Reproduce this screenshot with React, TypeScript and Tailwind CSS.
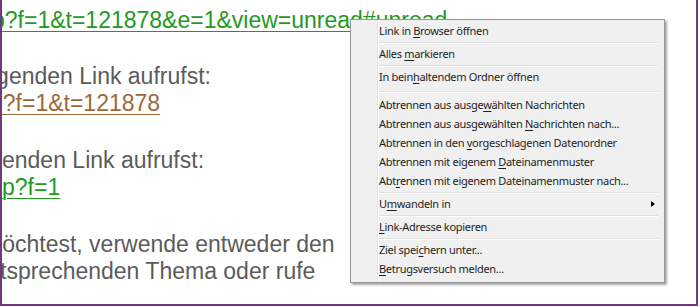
import { ReactNode } from 'react';

const lineCls = 'whitespace-nowrap h-[27px] leading-[27px]';

function Sep({ className = '' }: { className?: string }) {
  return (
    <div className={`ml-[26px] mr-[6px] border-t border-[#e0e0e0] border-b border-b-white ${className}`} />
  );
}

function Item({ children, tall, arrow }: { children: ReactNode; tall?: boolean; arrow?: boolean }) {
  return (
    <div className={`relative flex items-center pl-[28px] ${tall ? 'h-[21px]' : 'h-[19px]'}`}>
      <span>{children}</span>
      {arrow && (
        <span className="absolute right-[9px] top-[6px] w-0 h-0 border-y-[3.5px] border-y-transparent border-l-[4px] border-l-black" />
      )}
    </div>
  );
}

function K({ children }: { children: ReactNode }) {
  return <u className="underline underline-offset-[2px] decoration-[1px]">{children}</u>;
}

export default function App() {
  return (
    <div className="w-[700px] h-[307px] bg-white">
      <div
        className="relative w-[698px] h-[306px] overflow-hidden border-l-2 border-r-2 border-b-2 border-[#74367f] text-[23px] text-[#5b5b5b]"
        style={{ fontFamily: '"Liberation Sans", Arial, sans-serif' }}
      >
        <div className="pt-[7px]">
          <div className={`${lineCls} text-[#1f9a1f] underline underline-offset-[3px] decoration-[1px]`}>
            <span className="-ml-[10px]">p?f=1&amp;t=121878&amp;e=1&amp;view=unread#unread</span>
          </div>

          <div className={`${lineCls} mt-[29px]`}>
            <span className="-ml-[11px]">lgenden Link aufrufst:</span>
          </div>
          <div className={`${lineCls} text-[#9a6a3c] underline underline-offset-[3px] decoration-[1px]`}>
            <span className="-ml-[12px]">p?f=1&amp;t=121878</span>
          </div>

          <div className={`${lineCls} mt-[30px]`}>
            <span>enden Link aufrufst:</span>
          </div>
          <div className={`${lineCls} text-[#1f9a1f] underline underline-offset-[3px] decoration-[1px]`}>
            <span>p?f=1</span>
          </div>

          <div className={`${lineCls} mt-[30px]`}>
            <span className="-ml-[19px]">möchtest, verwende entweder den</span>
          </div>
          <div className={lineCls}>
            <span className="-ml-[2px]">tsprechenden Thema oder rufe</span>
          </div>
        </div>

        <div
          className="absolute left-[348px] top-[19px] w-[315px] border border-[#979797] bg-[#f0f0f0] pt-[1px] pb-[3px] text-[11px] tracking-[-0.3px] text-[#1e1e1e] shadow-[2px_2px_2px_rgba(0,0,0,0.35)]"
          style={{ fontFamily: '"Noto Sans", "Open Sans", sans-serif' }}
        >
          <div className="absolute left-[26px] top-0 bottom-0 border-l border-[#e2e3e3] border-r border-r-white" />
          <Item tall>Link in <K>B</K>rowser öffnen</Item>
          <Sep />
          <Item tall>Alles <K>m</K>arkieren</Item>
          <Sep />
          <Item tall>In bein<K>h</K>altendem Ordner öffnen</Item>
          <Sep className="my-[3px]" />
          <Item>Abtrennen aus ausge<K>w</K>ählten Nachrichten</Item>
          <Item>Abtrennen aus ausgewählten <K>N</K>achrichten nach...</Item>
          <Item>Abtrennen in den <K>v</K>orgeschlagenen Datenordner</Item>
          <Item>Abtrennen mit eigenem <K>D</K>ateinamenmuster</Item>
          <Item>Abt<K>r</K>ennen mit eigenem Dateinamenmuster nach...</Item>
          <Sep className="my-[1px]" />
          <Item arrow>U<K>m</K>wandeln in</Item>
          <Sep className="my-[1px]" />
          <Item><K>L</K>ink-Adresse kopieren</Item>
          <Sep className="my-[1px]" />
          <Item>Ziel spei<K>c</K>hern unter...</Item>
          <Item><K>B</K>etrugsversuch melden...</Item>
        </div>
      </div>
    </div>
  );
}
